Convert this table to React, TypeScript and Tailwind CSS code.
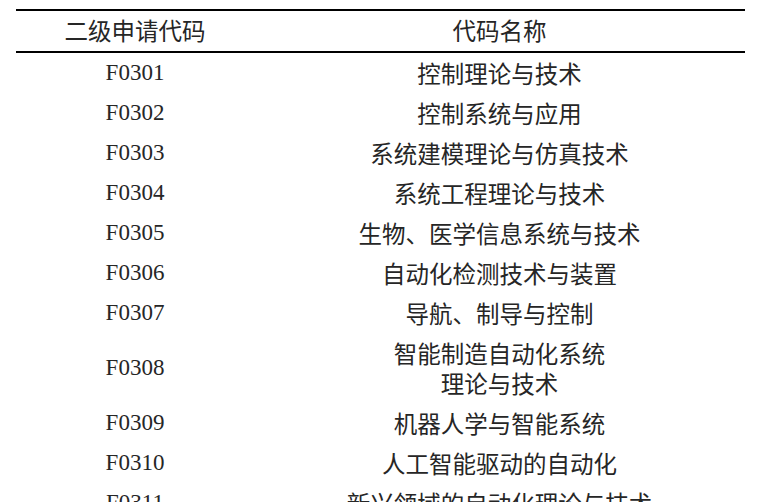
const rows: { code: string; name: string[] }[] = [
  { code: "F0301", name: ["控制理论与技术"] },
  { code: "F0302", name: ["控制系统与应用"] },
  { code: "F0303", name: ["系统建模理论与仿真技术"] },
  { code: "F0304", name: ["系统工程理论与技术"] },
  { code: "F0305", name: ["生物、医学信息系统与技术"] },
  { code: "F0306", name: ["自动化检测技术与装置"] },
  { code: "F0307", name: ["导航、制导与控制"] },
  { code: "F0308", name: ["智能制造自动化系统", "理论与技术"] },
  { code: "F0309", name: ["机器人学与智能系统"] },
  { code: "F0310", name: ["人工智能驱动的自动化"] },
  { code: "F0311", name: ["新兴领域的自动化理论与技术"] },
];

const cjk = "font-['Noto_Sans_CJK_SC',sans-serif] text-[23.5px]";
const serif = "font-['Liberation_Serif',serif] text-[23px]";

export default function App() {
  return (
    <div className="h-[502px] w-[776px] overflow-hidden bg-white pt-[9px] text-[#262626]">
      <div className="ml-4 w-[729px]">
        {/* header */}
        <div className="flex h-[44px] items-center border-y-2 border-black">
          <div className={`w-[238px] text-center ${cjk}`}>二级申请代码</div>
          <div className={`flex-1 text-center ${cjk}`}>代码名称</div>
        </div>

        {rows.map((r) => (
          <div
            key={r.code}
            className={`flex items-center ${r.name.length > 1 ? "h-[70px]" : "h-[40px]"}`}
          >
            <div className={`w-[238px] text-center ${serif}`}>{r.code}</div>
            <div className={`flex flex-1 flex-col items-center gap-[2px] leading-[28px] ${cjk}`}>
              {r.name.map((n) => (
                <div key={n}>{n}</div>
              ))}
            </div>
          </div>
        ))}
      </div>
    </div>
  );
}
